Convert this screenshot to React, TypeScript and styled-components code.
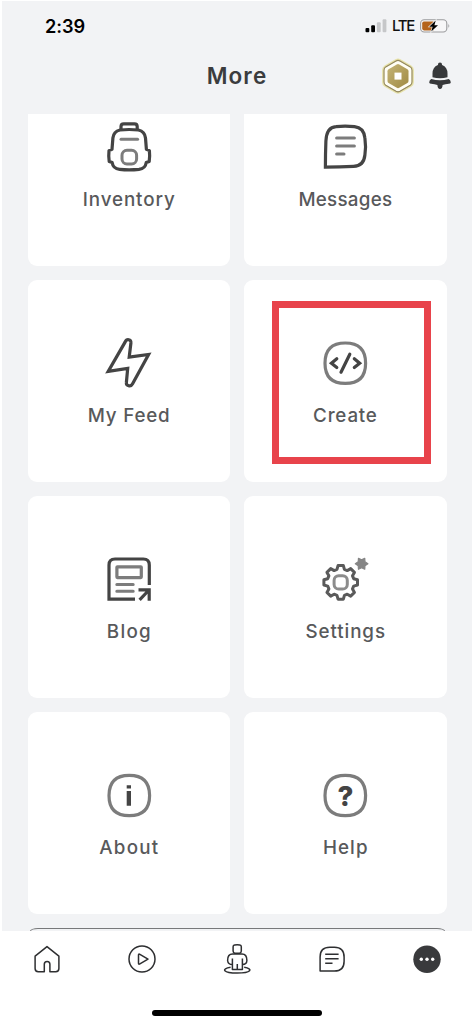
import React from 'react';
import styled, { createGlobalStyle } from 'styled-components';

const DARK = '#444444';
const MID = '#7c7c7c';
const INK = '#2e2f31';

const GlobalStyle = createGlobalStyle`
  body { margin: 0; background: #ffffff; font-family: Inter, "Liberation Sans", sans-serif; }
  * { box-sizing: border-box; }
  svg { display: block; }
`;

const Screen = styled.div`
  width: 474px;
  height: 1025px;
  display: flex;
  flex-direction: column;
  overflow: hidden;
  background: #ffffff;
`;

const Page = styled.main`
  height: 930px;
  margin: 1px 2px 0;
  display: flex;
  flex-direction: column;
  background: #f2f3f5;
  overflow: hidden;
`;

const StatusBar = styled.div`
  flex: none;
  height: 49px;
  padding: 0 21px 0 43px;
  display: flex;
  align-items: center;
  justify-content: space-between;
`;

const Clock = styled.span`
  font-size: 18.2px;
  font-weight: 600;
  letter-spacing: -0.1px;
  color: #000;
`;

const StatusIcons = styled.div`
  display: flex;
  align-items: center;
`;

const Network = styled.span`
  margin: 0 6px 0 5px;
  width: 22px;
  font-size: 15px;
  line-height: 20px;
  letter-spacing: -1.3px;
  font-weight: 500;
  color: #111;
`;

const Header = styled.header`
  flex: none;
  height: 64px;
  padding: 0 20px 12px;
  display: grid;
  grid-template-columns: 1fr auto 1fr;
  align-items: center;
`;

const Title = styled.h1`
  grid-column: 2;
  margin: 0;
  font-size: 22.5px;
  line-height: 30px;
  font-weight: 600;
  letter-spacing: 1.1px;
  color: #3b3c3e;
`;

const Actions = styled.div`
  display: flex;
  align-items: center;
  justify-content: flex-end;
  gap: 13px;
`;

const Scroller = styled.div`
  flex: 1;
  min-height: 0;
  overflow: hidden;
  padding: 0 25.5px;
  display: flex;
  flex-direction: column;
  justify-content: flex-end;
`;

const Grid = styled.div`
  flex: none;
  display: grid;
  grid-template-columns: repeat(2, 202.5px);
  grid-auto-rows: 202px;
  gap: 14px;
`;

const Card = styled.section`
  display: flex;
  flex-direction: column;
  align-items: center;
  padding-top: 53px;
  border-radius: 9px;
  background: #ffffff;
`;

const Label = styled.span<{ $track: number }>`
  margin-top: 11px;
  padding-left: ${p => p.$track}px;
  font-size: 18.8px;
  line-height: 24px;
  font-weight: 500;
  letter-spacing: ${p => p.$track}px;
  color: #58595b;
  white-space: nowrap;
`;

const Highlight = styled.div`
  align-self: flex-start;
  width: 159px;
  height: 163px;
  margin: -32px 0 0 28px;
  padding: 25px 13px 0 0;
  display: flex;
  flex-direction: column;
  align-items: center;
  border: 7px solid #e8434b;
`;

const NextCard = styled.div`
  flex: none;
  height: 3px;
  margin: 14px 2px 0;
  border: 1.5px solid #77787a;
  border-bottom: 0;
  border-radius: 8px 8px 0 0 / 3px 3px 0 0;
`;

const TabBar = styled.nav`
  flex: none;
  height: 55px;
  display: grid;
  grid-template-columns: repeat(5, 1fr);
  justify-items: center;
  align-items: center;
  background: #fff;
`;

const HomeIndicator = styled.div`
  width: 170px;
  height: 5.5px;
  margin: 24px auto 0;
  border-radius: 3px;
  background: #000;
`;

const Art = ({ children }: { children: React.ReactNode }) => (
  <svg width="60" height="60" viewBox="0 0 60 60" fill="none" stroke={DARK} strokeWidth="3.2">
    {children}
  </svg>
);

const squircle =
  'M30.3 10C44 10 50.6 16.5 50.6 30.2S44 50.4 30.3 50.4 10 44 10 30.2 16.6 10 30.3 10Z';

const polar = (cx: number, cy: number, r: number, deg: number) => {
  const a = (deg * Math.PI) / 180;
  return `${(cx + r * Math.sin(a)).toFixed(2)} ${(cy - r * Math.cos(a)).toFixed(2)}`;
};

const gear = (cx: number, cy: number) =>
  'M' +
  Array.from({ length: 8 }, (_, i) => i * 45)
    .flatMap(d => [
      polar(cx, cy, 13.5, d - 16),
      polar(cx, cy, 17, d - 9),
      polar(cx, cy, 17, d + 9),
      polar(cx, cy, 13.5, d + 16),
    ])
    .join('L') +
  'Z';

const star = (cx: number, cy: number) =>
  'M' +
  Array.from({ length: 12 }, (_, i) => polar(cx, cy, i % 2 ? 6.3 : 3.9, i * 30)).join('L') +
  'Z';

const Backpack = () => (
  <Art>
    <path d="M22 12V9.5Q22 6.8 24.8 6.8H35.4Q38.2 6.8 38.2 9.5V12" />
    <path d="M21 13Q30 12 39.4 13Q45.8 14.4 46.5 21L47.4 32.3L50.4 33.6Q51 39 50.2 44.4L47.2 45.6Q46.4 51.6 40 52.4Q30 53.4 20.6 52.4Q14 51.6 13.2 45.6L10.2 44.4Q9.4 39 10 33.6L13 32.3L13.9 21Q14.6 14.4 21 13Z" strokeLinejoin="round" />
    <path d="M22 22.3H38.6" stroke={MID} strokeWidth="3" strokeLinecap="round" />
    <rect x="23" y="33.3" width="14.6" height="13.6" rx="5" stroke={MID} strokeWidth="3" />
  </Art>
);

const Message = () => (
  <Art>
    <path d="M10.4 50.2Q10.4 37 10.9 24Q11.6 10.4 21 9.7Q30 8.6 39.5 9.7Q48.7 10.6 49.9 21Q51.2 30 49.9 38Q48.8 49 38.5 49.4Q25 50.2 10.4 50.2Z" />
    <path d="M21.6 21H39.4M21.6 29H39.4M21.6 37H29" stroke={MID} strokeWidth="3" strokeLinecap="round" />
  </Art>
);

const Bolt = () => (
  <Art>
    <path d="M26.2 8.9C27.7 5.6 32.2 6.2 31.9 10L30.2 24.2L49.6 21.5L33.6 50.8C31.8 54.3 26.9 53 27.4 49.2L28.7 35.4L9.2 38.4Z" />
  </Art>
);

const Code = () => (
  <Art>
    <path d={squircle} stroke={MID} />
    <path d="M21.8 25.8L16.4 30.2L21.8 34.6M34.8 21.2L26 39.2M39.3 25.8L44.7 30.2L39.3 34.6" strokeLinecap="round" />
  </Art>
);

const Blog = () => (
  <Art>
    <path d="M36 50.2H10V16Q10 10 16 10H44.3Q50.3 10 50.3 16V36" />
    <rect x="17.9" y="17.8" width="24.4" height="10.8" stroke={MID} rx=".5" />
    <path d="M17.8 35.4H34.2M17.8 42.2H34.2" stroke={MID} strokeWidth="3" strokeLinecap="round" />
    <path d="M39.5 40.9H50.2V51.7M50 41L40.6 50.8" />
  </Art>
);

const Gear = () => (
  <Art>
    <path d={gear(25.7, 33.4)} stroke="#5a5a5a" strokeWidth="3" strokeLinejoin="round" />
    <rect x="19.1" y="26.8" width="13.2" height="13.2" rx="4.6" stroke="#8c8c8c" strokeWidth="3" />
    <path d={star(46.6, 14.8)} fill="#858585" stroke="#858585" strokeWidth="1.2" strokeLinejoin="round" />
  </Art>
);

const Info = () => (
  <Art>
    <path d={squircle} stroke={MID} transform="translate(0 .3)" />
    <path d="M27.7 20.3H32V23.4H27.7ZM27.7 26H32V40.8H27.7Z" fill={DARK} stroke="none" />
  </Art>
);

const Question = () => (
  <Art>
    <path d={squircle} stroke={MID} transform="translate(0 .3)" />
    <text x="30.4" y="40.7" textAnchor="middle" fontSize="27.5" fontWeight="800" fontFamily="Inter, sans-serif" fill={DARK} stroke="none">?</text>
  </Art>
);

const TabIcon = ({ children }: { children: React.ReactNode }) => (
  <svg width="36" height="36" viewBox="0 0 36 36" fill="none" stroke={INK} strokeWidth="1.5" strokeLinejoin="round">
    {children}
  </svg>
);

const Tile = ({ label, track, children }: { label: string; track: number; children: React.ReactNode }) => (
  <Card>
    {children}
    <Label $track={track}>{label}</Label>
  </Card>
);

export default function App() {
  return (
    <Screen>
      <GlobalStyle />
      <Page>
        <StatusBar>
          <Clock>2:39</Clock>
          <StatusIcons>
            <svg width="22" height="14" viewBox="0 0 22 14">
              <rect x=".5" y="9" width="3.8" height="4.3" rx="1" fill="#000" />
              <rect x="6.2" y="6.2" width="3.8" height="7.1" rx="1" fill="#000" />
              <rect x="11.9" y="3.2" width="3.8" height="10.1" rx="1" fill="#c6c7c9" />
              <rect x="17.6" y=".2" width="3.8" height="13.1" rx="1" fill="#c6c7c9" />
            </svg>
            <Network>LTE</Network>
            <svg width="31" height="14" viewBox="0 0 31 14">
              <rect x=".6" y=".8" width="26.2" height="12.2" rx="3.6" fill="#f7f7f8" stroke="#9b9b9d" strokeWidth="1.1" />
              <path d="M4 2.4H13.5V11.4H4Q2.2 11.4 2.2 9.6V4.2Q2.2 2.4 4 2.4Z" fill="#b4641c" />
              <path d="M15.7 1.4L9.2 7.7H12.6L11.3 12.6L18 6.2H14.4Z" fill="#000" stroke="#f7f7f8" strokeWidth="1.2" paintOrder="stroke" />
              <path d="M28.4 4.8Q30.2 6.8 28.4 8.9Z" fill="#9b9b9d" />
            </svg>
          </StatusIcons>
        </StatusBar>
        <Header>
          <Title>More</Title>
          <Actions>
            <svg width="34" height="36" viewBox="0 0 34 36">
              <defs>
                <linearGradient id="gold" x1="0" y1="0" x2="1" y2="1">
                  <stop offset="0" stopColor="#c4b477" />
                  <stop offset="1" stopColor="#a08a42" />
                </linearGradient>
              </defs>
              <path d="M15 2.2Q17 1.1 19 2.2L29.8 8.4Q31.8 9.6 31.8 12V24.2Q31.8 26.6 29.8 27.8L19 34Q17 35.1 15 34L4.2 27.8Q2.2 26.6 2.2 24.2V12Q2.2 9.6 4.2 8.4Z" fill="#fffef6" stroke="#e6e1a8" strokeWidth="2.2" />
              <path d="M15 2.9Q17 1.8 19 2.9L29.3 8.9Q31 10 31 12.2V24Q31 26.2 29.3 27.3L19 33.3Q17 34.4 15 33.3L4.7 27.3Q3 26.2 3 24V12.2Q3 10 4.7 8.9Z" fill="none" stroke="#92865f" strokeWidth="1.1" />
              <path d="M15.8 6.4Q17 5.7 18.2 6.4L26.4 11.2Q27.5 11.9 27.5 13.2V23Q27.5 24.3 26.4 25L18.2 29.8Q17 30.5 15.8 29.8L7.6 25Q6.5 24.3 6.5 23V13.2Q6.5 11.9 7.6 11.2Z" fill="url(#gold)" />
              <rect x="13.5" y="14.6" width="7" height="7" fill="#fff" />
            </svg>
            <svg width="24" height="28" viewBox="0 0 24 28" fill="#37383a">
              <path d="M12 .5Q14.1 .5 14.1 2.9Q19.5 5 19.5 11.5V15.3Q12 17.3 4.5 15.3V11.5Q4.5 5 9.9 2.9Q9.9 .5 12 .5Z" />
              <path d="M3.2 16.9Q12 19.8 20.8 16.9Q22.8 18.2 22.8 20.5Q22.5 21.7 20.8 21.7Q17.3 22.1 14.6 22.9Q14.4 27 12 27T9.4 22.9Q6.7 22.1 3.2 21.7Q1.5 21.7 1.2 20.5Q1.2 18.2 3.2 16.9Z" />
            </svg>
          </Actions>
        </Header>
        <Scroller>
          <Grid>
            <Tile label="Inventory" track={0.9}><Backpack /></Tile>
            <Tile label="Messages" track={0.25}><Message /></Tile>
            <Tile label="My Feed" track={0.8}><Bolt /></Tile>
            <Card>
              <Highlight>
                <Code />
                <Label $track={0.8}>Create</Label>
              </Highlight>
            </Card>
            <Tile label="Blog" track={1.3}><Blog /></Tile>
            <Tile label="Settings" track={0.9}><Gear /></Tile>
            <Tile label="About" track={1.2}><Info /></Tile>
            <Tile label="Help" track={1.1}><Question /></Tile>
          </Grid>
          <NextCard />
        </Scroller>
      </Page>
      <TabBar>
        <TabIcon>
          <path d="M18 5.6L29.9 15.2V27.5Q29.9 30.7 26.7 30.7H20.9V23.3Q20.9 20.5 18.1 20.5T15.3 23.3V30.7H9.3Q6.1 30.7 6.1 27.5V15.2Z" />
        </TabIcon>
        <TabIcon>
          <circle cx="18" cy="18" r="13" />
          <path d="M14.5 14V22.2Q14.5 23.8 15.9 22.9L24 18.2L15.9 13.3Q14.5 12.5 14.5 14Z" />
        </TabIcon>
        <TabIcon>
          <path d="M15.6 4.1Q18.2 3.6 20.8 4.1Q22.3 4.4 22.3 5.8V10Q22.3 11.6 20.7 12.2H15.7Q14.1 11.6 14.1 10V5.8Q14.1 4.4 15.6 4.1Z" />
          <path d="M13.5 13.1H23Q27.9 13.1 27.9 19.5Q27.7 23.4 23.4 23.6V28.6H13.4V23.6Q9 23.4 8.6 19.5Q8.6 13.1 13.5 13.1ZM13.4 17.5V23.6M23.4 17.5V23.6M18.3 23V28.6" />
          <path d="M11.6 26.3C1.8 27.8 4 32 18.2 32S34.6 27.8 25.2 26.3" />
        </TabIcon>
        <TabIcon>
          <path d="M6.1 30V16Q6.1 6.2 15.8 6.2H20.4Q30.1 6.2 30.1 16V20.2Q30.1 30 20.4 30Z" />
          <path d="M11.2 13.2H24.6M11.2 17.8H24.6M11.2 22.3H18.5" />
        </TabIcon>
        <TabIcon>
          <circle cx="18" cy="18.2" r="13.7" fill="#393a3c" stroke="none" />
          <g fill="#fff" stroke="none">
            <circle cx="12.3" cy="18.2" r="1.7" />
            <circle cx="18" cy="18.2" r="1.7" />
            <circle cx="23.7" cy="18.2" r="1.7" />
          </g>
        </TabIcon>
      </TabBar>
      <HomeIndicator />
    </Screen>
  );
}
